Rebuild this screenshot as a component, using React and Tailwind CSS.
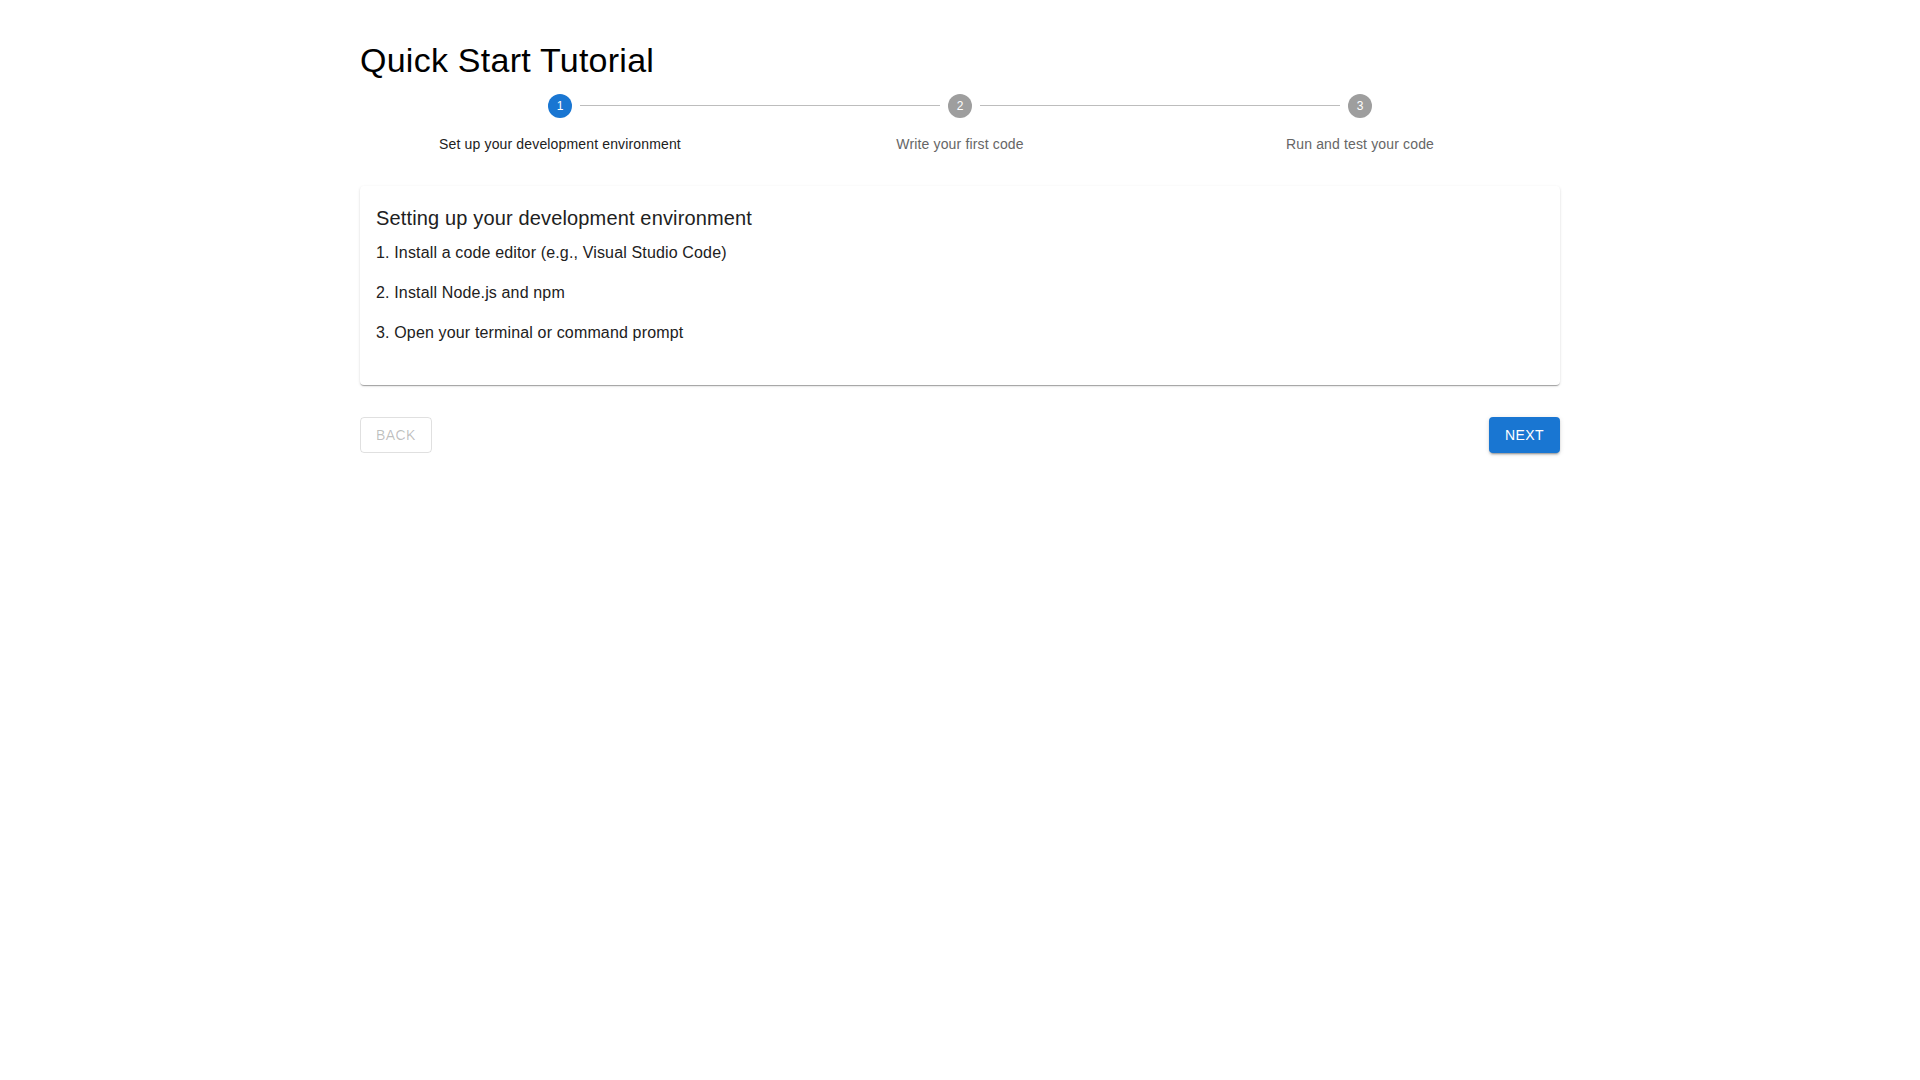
export default function App() {
  const steps = [
    "Set up your development environment",
    "Write your first code",
    "Run and test your code",
  ];
  const active = 0;

  const items = [
    "1. Install a code editor (e.g., Visual Studio Code)",
    "2. Install Node.js and npm",
    "3. Open your terminal or command prompt",
  ];

  return (
    <div className="min-h-screen bg-white font-['Liberation_Sans',Arial,sans-serif]">
      <div className="w-[1200px] mx-auto pt-10">
        <h1 className="text-[34px] leading-[1.235] tracking-[0.25px] text-black mb-[12px]">Quick Start Tutorial</h1>

        {/* Stepper */}
        <div className="flex">
          {steps.map((label, i) => (
            <div key={i} className="flex-1 flex flex-col items-center">
              <div className="w-full flex items-center">
                <div className={`flex-1 border-t border-[#bdbdbd] mr-2 ${i === 0 ? "invisible" : ""}`} />
                <div
                  className={`w-6 h-6 rounded-full flex items-center justify-center text-white text-[12px] leading-none ${
                    i === active ? "bg-[#1976d2]" : "bg-[#9e9e9e]"
                  }`}
                >
                  {i + 1}
                </div>
                <div className={`flex-1 border-t border-[#bdbdbd] ml-2 ${i === steps.length - 1 ? "invisible" : ""}`} />
              </div>
              <span
                className={`mt-4 text-[14px] leading-5 tracking-[0.15px] ${
                  i === active ? "text-[#212121] font-medium" : "text-[#666666]"
                }`}
              >
                {label}
              </span>
            </div>
          ))}
        </div>

        {/* Step content */}
        <div className="mt-8 bg-white rounded shadow-[0px_2px_1px_-1px_rgba(0,0,0,0.2),0px_1px_1px_0px_rgba(0,0,0,0.14),0px_1px_3px_0px_rgba(0,0,0,0.12)] px-4 pt-4 pb-6 text-[#212121]">
          <h2 className="text-[20px] leading-8 tracking-[0.15px] mb-[7px]">Setting up your development environment</h2>
          {items.map((t, i) => (
            <p key={i} className="text-[16px] leading-6 tracking-[0.15px] mb-4">
              {t}
            </p>
          ))}
        </div>

        {/* Navigation */}
        <div className="mt-8 flex justify-between">
          <button
            disabled
            className="h-[36.5px] px-[15px] border border-[rgba(0,0,0,0.12)] rounded text-[14px] font-medium tracking-[0.4px] uppercase text-[rgba(0,0,0,0.26)]"
          >
            Back
          </button>
          <button className="h-[36.5px] px-4 rounded bg-[#1976d2] text-white text-[14px] font-medium tracking-[0.4px] uppercase shadow-[0px_3px_1px_-2px_rgba(0,0,0,0.2),0px_2px_2px_0px_rgba(0,0,0,0.14),0px_1px_5px_0px_rgba(0,0,0,0.12)]">
            Next
          </button>
        </div>
      </div>
    </div>
  );
}
